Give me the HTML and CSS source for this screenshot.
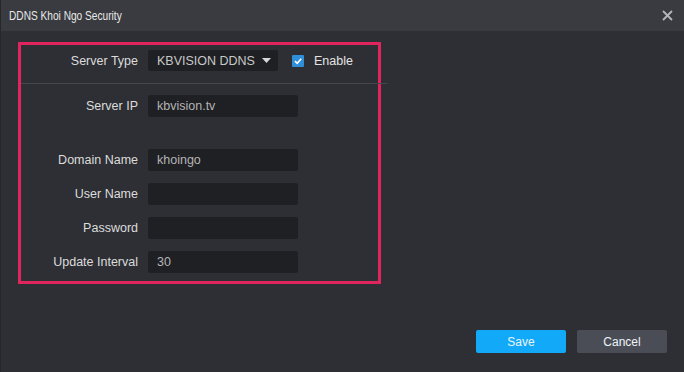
FILE: index.html
```html
<!DOCTYPE html>
<html lang="en">
<head>
    <meta charset="UTF-8">
    <title>DDNS</title>
    <link rel="stylesheet" href="styles.css">
</head>
<body>
    <div class="dialog">
        <div class="titlebar">
            <span class="title">DDNS Khoi Ngo Security</span>
            <svg class="close" width="11" height="11" viewBox="0 0 11 11">
                <path d="M1 1 L10 10 M10 1 L1 10" stroke="#b4b6ba" stroke-width="1.8" fill="none"/>
            </svg>
        </div>

        <div class="content">
            <div class="form">
                <div class="row top-row">
                    <label>Server Type</label>
                    <div class="select">
                        <span>KBVISION DDNS</span>
                        <svg width="9" height="5" viewBox="0 0 9 5"><path d="M0 0 H9 L4.5 5 Z" fill="#d8d8d8"/></svg>
                    </div>
                    <div class="check">
                        <svg width="12" height="12" viewBox="0 0 12 12">
                            <rect x="0" y="0" width="12" height="12" rx="1" fill="#2f8fd9"/>
                            <path d="M3 6.2 L5.2 8.3 L9.2 3.8" stroke="#fff" stroke-width="1.6" fill="none"/>
                        </svg>
                        <span>Enable</span>
                    </div>
                </div>
                <div class="divider"></div>
                <div class="row">
                    <label>Server IP</label>
                    <div class="input">kbvision.tv</div>
                </div>
                <div class="row spaced">
                    <label>Domain Name</label>
                    <div class="input">khoingo</div>
                </div>
                <div class="row">
                    <label>User Name</label>
                    <div class="input"></div>
                </div>
                <div class="row">
                    <label>Password</label>
                    <div class="input"></div>
                </div>
                <div class="row">
                    <label>Update Interval</label>
                    <div class="input">30</div>
                </div>
            </div>
        </div>

        <div class="footer">
            <button class="btn save">Save</button>
            <button class="btn cancel">Cancel</button>
        </div>
    </div>
</body>
</html>
```

FILE: styles.css
```css
body {
    margin: 0;
    background-color: #2d2f34;
    font-family: "Liberation Sans", Arial, sans-serif;
    font-size: 12.5px;
    color: #dcdcdc;
}
.dialog {
    height: 372px;
    display: flex;
    flex-direction: column;
    border-left: 1px solid #25272b;
    box-sizing: border-box;
}
.titlebar {
    height: 31px;
    flex-shrink: 0;
    background-color: #393b40;
    display: flex;
    align-items: center;
    justify-content: space-between;
    padding: 0 11px 0 8px;
}
.title {
    font-size: 13px;
    color: #e8e8e8;
    transform: scaleX(0.78);
    transform-origin: left center;
}
.content {
    flex: 1;
    padding: 11px 0 0 17px;
}
.form {
    width: 363px;
    height: 242px;
    box-sizing: border-box;
    border: 3px solid #e0245e;
    padding-top: 5px;
}
.row {
    display: grid;
    grid-template-columns: 117px 150px;
    column-gap: 10px;
    align-items: center;
    margin-bottom: 12px;
}
.row.spaced {
    margin-top: 32px; /* collapses with the 12px above */
}
.row label {
    text-align: right;
    color: #dcdcdc;
}
.top-row {
    grid-template-columns: 117px 130px auto;
    margin-bottom: 12px;
}
.select {
    height: 21px;
    background-color: #1f2024;
    border-radius: 2px;
    display: flex;
    align-items: center;
    justify-content: space-between;
    padding: 0 7px 0 9px;
    color: #c8c8c8;
}
.check {
    display: flex;
    align-items: center;
    gap: 10px;
    margin-left: 4px;
    color: #e4e4e4;
}
.divider {
    height: 1px;
    background-color: #45474d;
    margin: 0 -9px 11px 0;
}
.input {
    height: 22px;
    box-sizing: border-box;
    background-color: #1f2024;
    border-radius: 2px;
    padding: 0 9px;
    line-height: 22px;
    color: #b4b4b4;
}
.footer {
    display: flex;
    justify-content: flex-end;
    gap: 11px;
    padding: 0 17px 19px 0;
}
.btn {
    width: 90px;
    height: 23px;
    border: none;
    border-radius: 2px;
    font-family: "Liberation Sans", Arial, sans-serif;
    font-size: 12px;
    color: #eef4fa;
}
.save {
    background-color: #12aaf8;
}
.cancel {
    background-color: #4a4d55;
}
```
